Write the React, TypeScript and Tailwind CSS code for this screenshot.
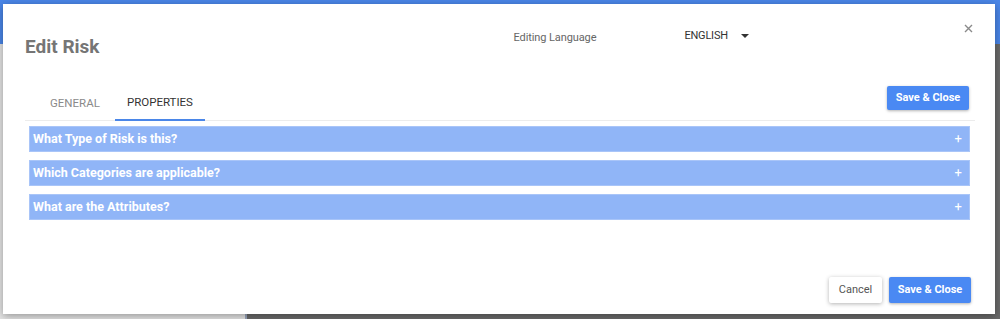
import React from "react";

const rows = [
  "What Type of Risk is this?",
  "Which Categories are applicable?",
  "What are the Attributes?",
];

export default function App() {
  return (
    <div
      className="relative w-[1000px] h-[319px] overflow-hidden flex flex-col"
      style={{ fontFamily: "Roboto, 'Liberation Sans', sans-serif" }}
    >
      {/* background page */}
      <div className="h-[44px] bg-[#4a86e8] shrink-0" />
      <div className="flex flex-1">
        <div className="w-[245px] bg-[#e4e4e4]" />
        <div className="w-[2px] bg-[#9aa6bd]" />
        <div className="flex-1 bg-[#6a6a6a]" />
      </div>

      {/* modal */}
      <div className="absolute left-[3px] top-[4px] w-[992px] h-[310px] bg-white shadow-[0_2px_8px_rgba(0,0,0,0.35)] flex flex-col">
        {/* header */}
        <div className="flex items-start h-[78px]">
          <div className="ml-[22px] mt-[33px] text-[19px] font-bold text-[#757575] leading-[20px]">
            Edit Risk
          </div>
          <div className="ml-[414px] mt-[27px] text-[11px] text-[#666] leading-[13px] tracking-[-0.1px]">
            Editing Language
          </div>
          <div className="ml-[88px] mt-[25px] flex items-center text-[11px] text-[#333] leading-[13px] tracking-[-0.2px]">
            <span>ENGLISH</span>
            <svg width="8" height="4" viewBox="0 0 8 4" className="ml-[13px]">
              <path d="M0 0 L8 0 L4 4 Z" fill="#333" />
            </svg>
          </div>
          <div className="ml-auto mr-[22px] mt-[20px]">
            <svg width="9" height="9" viewBox="0 0 9 9">
              <path d="M1 1 L8 8 M8 1 L1 8" stroke="#8a8a8a" strokeWidth="1.4" />
            </svg>
          </div>
        </div>

        {/* tabs row */}
        <div className="flex items-end ml-[22px] mr-[20px] border-b border-[#ececec] h-[39px]">
          <div className="flex ml-[12px] h-full">
            <div className="px-[13px] flex items-center text-[11.5px] text-[#8a8a8a] pt-[5px]">
              GENERAL
            </div>
            <div className="ml-[2px] px-[12px] flex items-center text-[11.5px] text-[#333] border-b-2 border-[#4a86e8] mb-[-1px] pt-[5px]">
              PROPERTIES
            </div>
          </div>
          <div className="ml-auto self-start mr-[6px] mt-[2px]">
            <button className="h-[24px] w-[82px] bg-[#4a89f3] text-white text-[11px] font-bold rounded-[2px] shadow-[0_1px_3px_rgba(0,0,0,0.3)]">
              Save &amp; Close
            </button>
          </div>
        </div>

        {/* accordions */}
        <div className="flex flex-col gap-[8px] mt-[5px] ml-[26px] mr-[25px]">
          {rows.map((r) => (
            <div
              key={r}
              className="h-[26px] bg-[#90b5f7] border border-[#a9c5f8] flex items-center pl-[3px] pr-[7px] text-white text-[12.5px] font-bold"
            >
              <span>{r}</span>
              <span className="ml-auto text-[13px] font-normal">+</span>
            </div>
          ))}
        </div>

        {/* footer */}
        <div className="mt-auto mb-[11px] mr-[24px] flex justify-end gap-[7px]">
          <button className="h-[26px] w-[53px] bg-white text-[#555] text-[11px] rounded-[2px] shadow-[0_1px_4px_rgba(0,0,0,0.3)]">
            Cancel
          </button>
          <button className="h-[26px] w-[82px] bg-[#4a89f3] text-white text-[11px] font-bold rounded-[2px] shadow-[0_1px_3px_rgba(0,0,0,0.3)]">
            Save &amp; Close
          </button>
        </div>
      </div>
    </div>
  );
}
